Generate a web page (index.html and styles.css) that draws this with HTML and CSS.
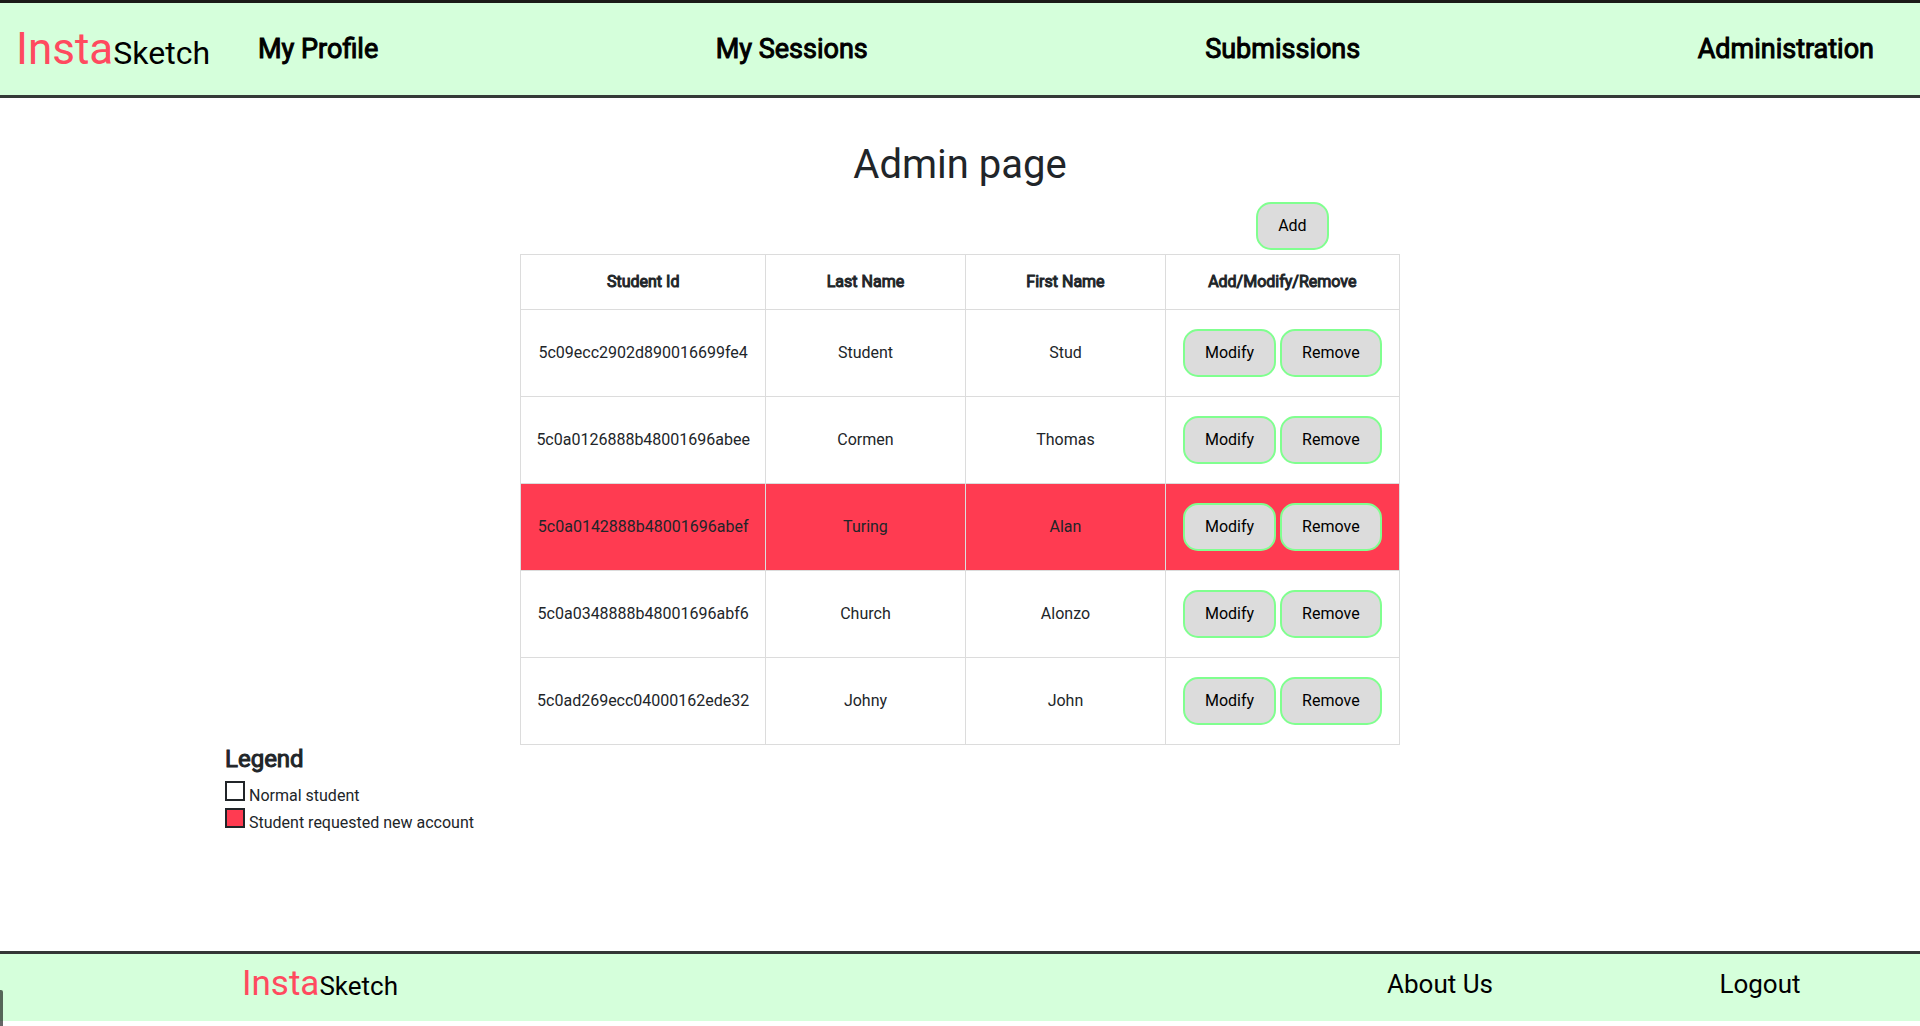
FILE: index.html
```html
<!DOCTYPE html>
<html lang="en">
<head>
  <meta charset="utf-8">
  <title>InstaSketch - Admin page</title>
  <link rel="stylesheet" href="styles.css">
</head>
<body>
  <header class="site-header">
    <a class="logo" href="#"><span class="logo-accent">Insta</span>Sketch</a>
    <nav class="main-nav">
      <a href="#">My Profile</a>
      <a href="#">My Sessions</a>
      <a href="#">Submissions</a>
      <a href="#">Administration</a>
    </nav>
  </header>

  <main class="content">
    <h1 class="page-title">Admin page</h1>
    <div class="students">
      <button class="btn btn-add" type="button">Add</button>
      <table class="student-table">
        <thead>
          <tr><th scope="col">Student Id</th><th scope="col" class="name-col">Last Name</th><th scope="col" class="name-col">First Name</th><th scope="col">Add/Modify/Remove</th></tr>
        </thead>
        <tbody>
          <tr>
            <td>5c09ecc2902d890016699fe4</td><td>Student</td><td>Stud</td>
            <td><div class="actions"><button class="btn" type="button">Modify</button><button class="btn" type="button">Remove</button></div></td>
          </tr>
          <tr>
            <td>5c0a0126888b48001696abee</td><td>Cormen</td><td>Thomas</td>
            <td><div class="actions"><button class="btn" type="button">Modify</button><button class="btn" type="button">Remove</button></div></td>
          </tr>
          <tr class="requested">
            <td>5c0a0142888b48001696abef</td><td>Turing</td><td>Alan</td>
            <td><div class="actions"><button class="btn" type="button">Modify</button><button class="btn" type="button">Remove</button></div></td>
          </tr>
          <tr>
            <td>5c0a0348888b48001696abf6</td><td>Church</td><td>Alonzo</td>
            <td><div class="actions"><button class="btn" type="button">Modify</button><button class="btn" type="button">Remove</button></div></td>
          </tr>
          <tr>
            <td>5c0ad269ecc04000162ede32</td><td>Johny</td><td>John</td>
            <td><div class="actions"><button class="btn" type="button">Modify</button><button class="btn" type="button">Remove</button></div></td>
          </tr>
        </tbody>
      </table>
    </div>

    <section class="legend">
      <h2 class="legend-title">Legend</h2>
      <ul class="legend-list">
        <li><span class="swatch"></span>Normal student</li>
        <li><span class="swatch swatch-requested"></span>Student requested new account</li>
      </ul>
    </section>
  </main>

  <footer class="site-footer">
    <a class="logo logo-small" href="#"><span class="logo-accent">Insta</span>Sketch</a>
    <a class="footer-link footer-about" href="#">About Us</a>
    <a class="footer-link" href="#">Logout</a>
  </footer>
  <div class="status-edge"></div>
</body>
</html>
```
FILE: styles.css
```css
* {
  box-sizing: border-box;
}

body {
  display: flex;
  flex-direction: column;
  min-height: 100vh;
  margin: 0;
  padding-bottom: 5px;
  background: #fff;
  color: #212529;
  font-family: Roboto, "Liberation Sans", sans-serif;
  font-size: 16px;
  line-height: 24px;
}

a {
  color: #000;
  text-decoration: none;
}

/* Header */
.site-header {
  display: flex;
  align-items: center;
  gap: 48px;
  padding: 12px 46px 8px 16px;
  background: #d5ffdb;
  border-top: 3px solid #1a1b17;
  border-bottom: 3px solid #343a37;
}

.logo {
  font-size: 32px;
  line-height: 68px;
}

.logo-accent {
  color: #ff4a5f;
  font-size: 44px;
}

.main-nav {
  display: flex;
  flex: 1;
  justify-content: space-between;
  padding-bottom: 4px;
  font-size: 27px;
  line-height: 40px;
  -webkit-text-stroke: 1px;
}

/* Student table */
.content {
  flex: 1;
}

.page-title {
  margin: 43px 0 13px;
  font-size: 40px;
  font-weight: 400;
  line-height: 48px;
  text-align: center;
}

.students {
  display: flex;
  flex-direction: column;
  width: fit-content;
  margin: 0 auto;
}

.student-table {
  border-collapse: collapse;
  text-align: center;
}

.student-table th,
.student-table td {
  padding: 15px;
  border: 1px solid #dcdcdc;
}

.student-table th {
  font-weight: 400;
  -webkit-text-stroke: 1px;
}

.student-table td {
  padding: 19px 15px;
}

.name-col {
  width: 200px;
}

.requested {
  background: #ff3b51;
}

.actions {
  display: flex;
  justify-content: center;
  gap: 4px;
  padding: 0 2px;
}

.btn {
  padding: 10px 20px;
  background: #dcdcdc;
  border: 2px solid #80ff8f;
  border-radius: 15px;
  color: #000;
  font: inherit;
}

.btn-add {
  align-self: flex-end;
  margin: 0 71px 4px 0;
}

/* Legend */
.legend {
  margin-left: 225px;
}

.legend-title {
  margin: 0 0 8px;
  font-size: 24px;
  font-weight: 400;
  line-height: 28px;
  -webkit-text-stroke: 1px;
}

.legend-list {
  margin: 0;
  padding: 0;
  list-style: none;
}

.legend-list li {
  display: flex;
  align-items: baseline;
  gap: 4px;
}

.swatch {
  width: 20px;
  height: 20px;
  border: 2px solid #212529;
}

.swatch-requested {
  background: #ff3b51;
}

/* Footer */
.site-footer {
  display: grid;
  grid-template-columns: 2fr 2fr 1fr 1fr;
  padding-bottom: 5px;
  background: #d5ffdb;
  border-top: 3px solid #343636;
  text-align: center;
}

.logo-small {
  font-size: 26px;
  line-height: 60px;
}

.logo-small .logo-accent {
  font-size: 35px;
}

.footer-link {
  font-size: 26px;
  line-height: 60px;
}

.footer-about {
  grid-column: 3;
}

.status-edge {
  position: fixed;
  bottom: 0;
  left: 0;
  width: 3px;
  height: 36px;
  background: rgba(0, 0, 0, 0.6);
  border-top-right-radius: 2px;
}
```
